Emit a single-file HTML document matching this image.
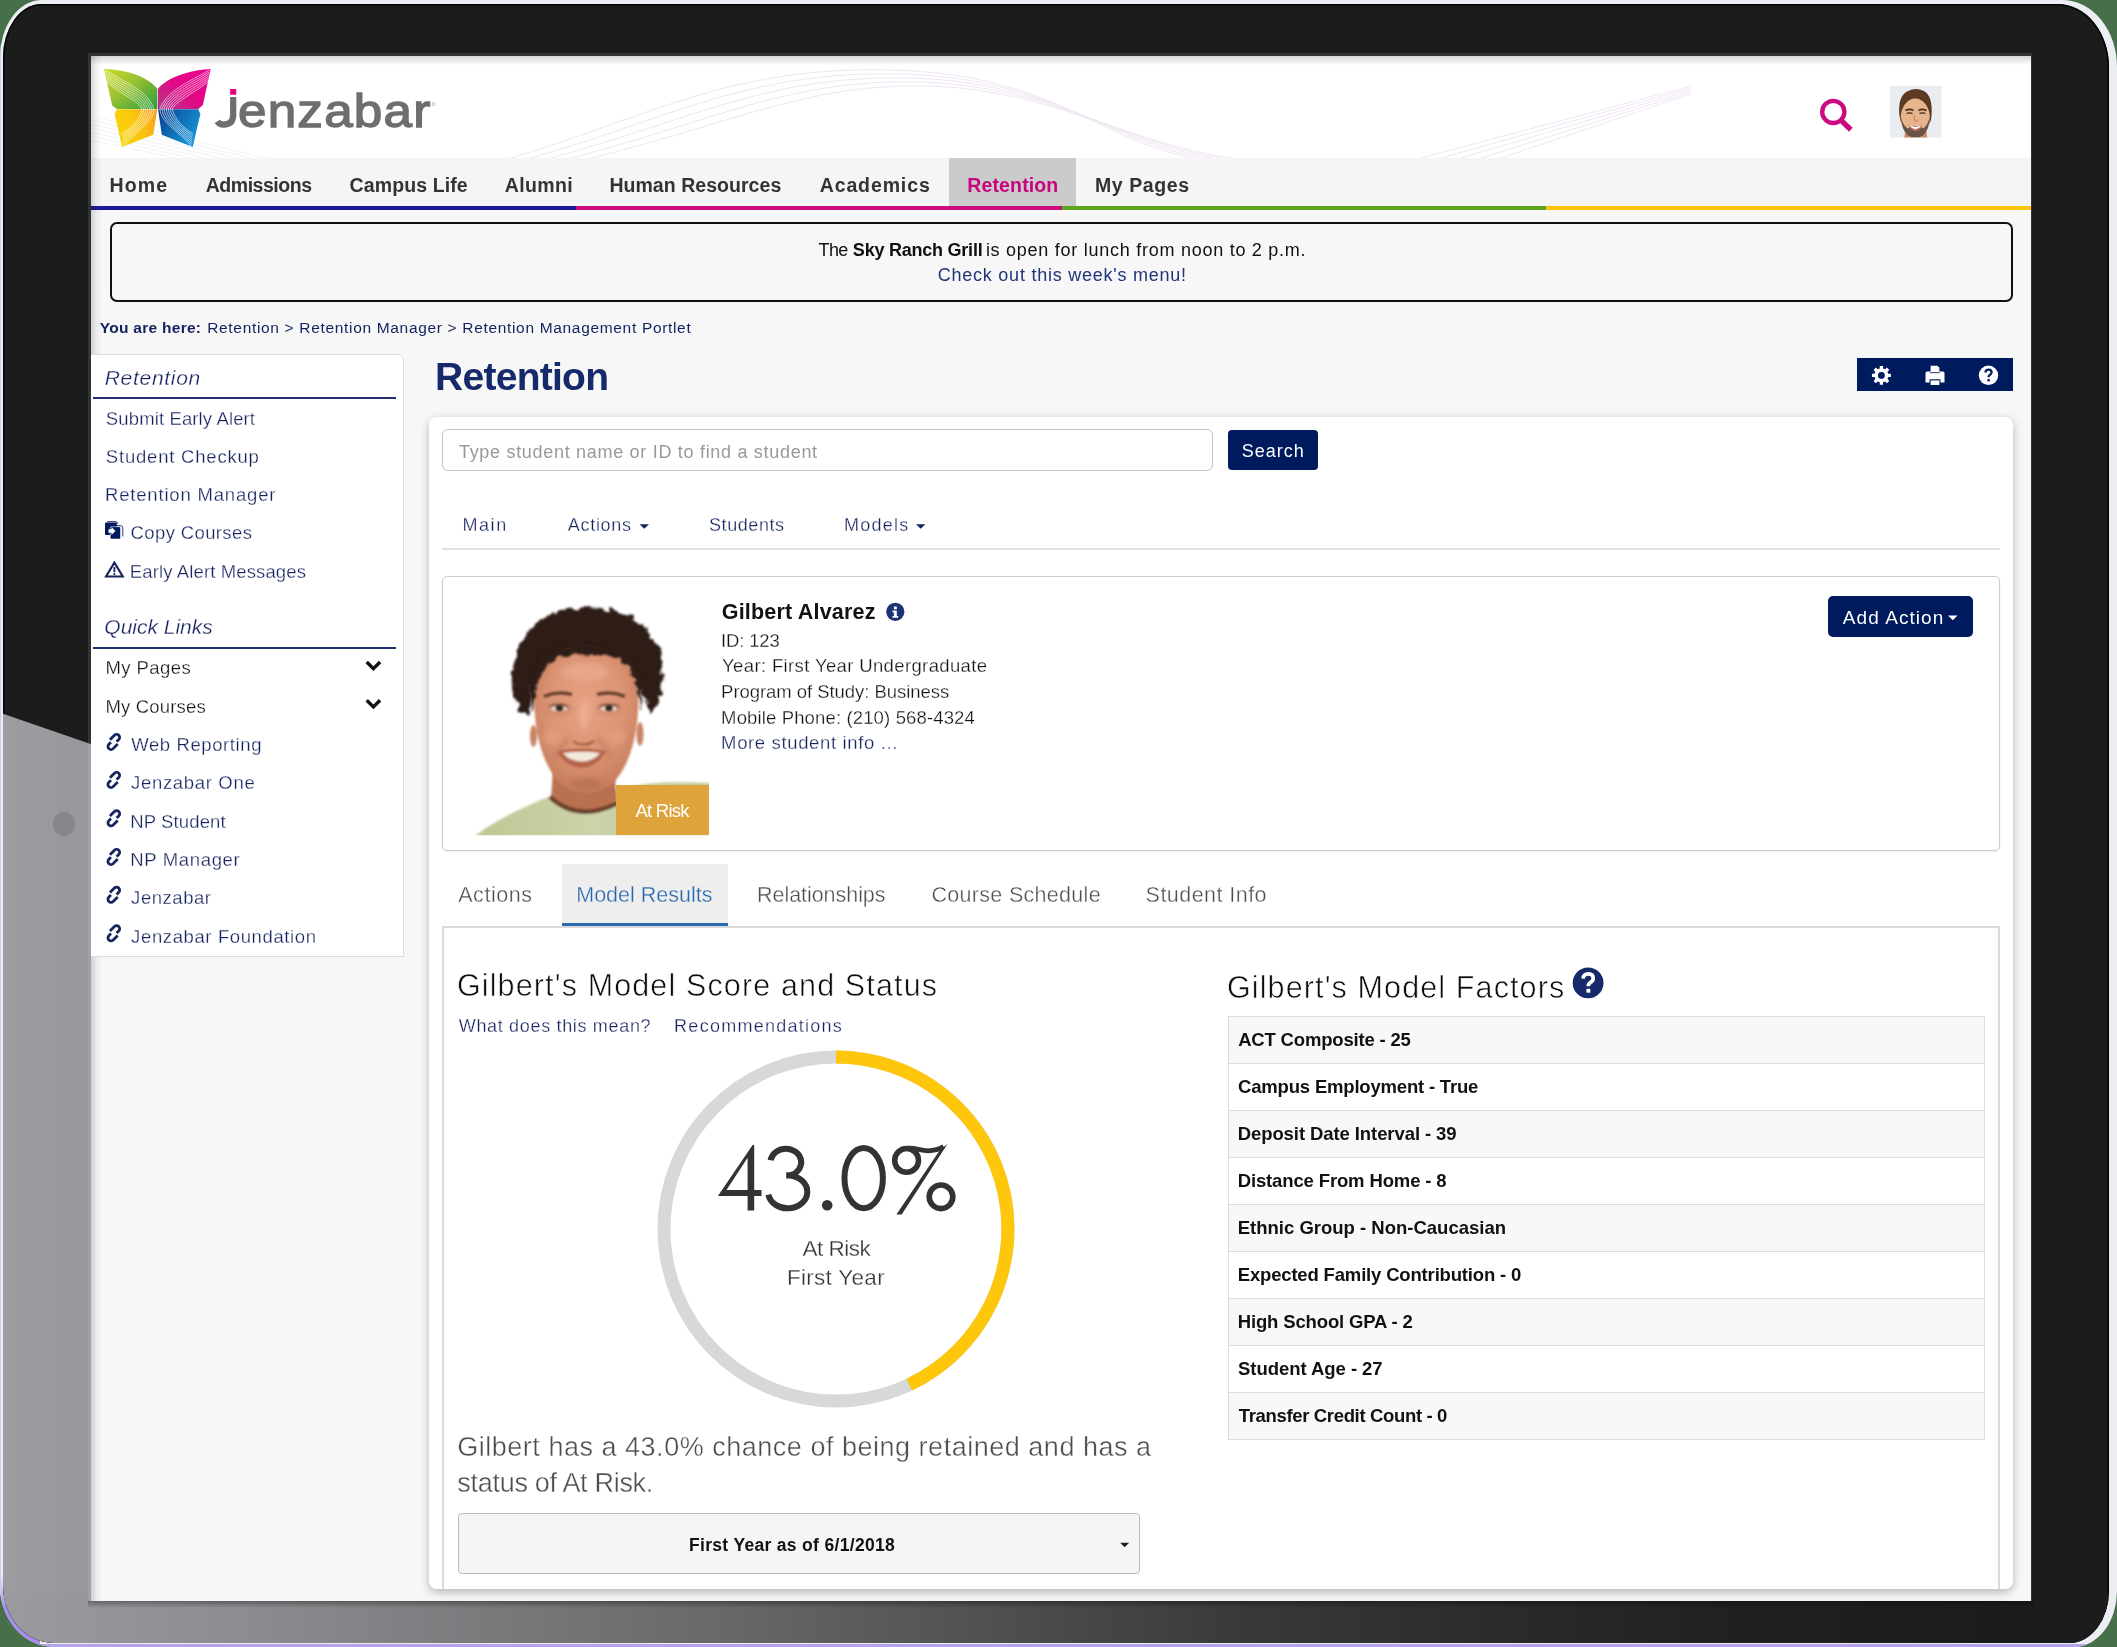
<!DOCTYPE html>
<html><head><meta charset="utf-8"><title>Retention</title>
<style>
html,body{margin:0;padding:0;}
body{width:2117px;height:1647px;overflow:hidden;background:#47704a;font-family:"Liberation Sans",sans-serif;position:relative;}
.a{position:absolute;}
.t{position:absolute;white-space:nowrap;}
svg{position:absolute;overflow:visible;}
</style></head><body>

<!-- tablet frame -->
<div class="a" style="left:0;top:0;width:2117px;height:1647px;border-radius:42px 55px 43px 54px / 57px 67px 56px 61px;background:#eceef4;overflow:hidden;"><div class="a" style="left:0;top:1644.4px;width:2085px;height:3px;background:#b5a3ea;"></div><div class="a" style="left:0;top:1575px;width:40px;height:72px;background:linear-gradient(to bottom,#eceef4,#a88df0 45%);"></div><div class="a" style="left:0;top:0;width:1.2px;height:1600px;background:#cbcbea;"></div></div>
<div class="a" id="bezel" style="left:3.4px;top:3.9px;width:2105.3px;height:1639px;border-radius:38.5px 51.5px 39.500px 50.500px / 53.500px 63px 52.500px 57.500px;background:#1b1d1c;overflow:hidden;box-shadow:inset 0 0 0 1.600px #050505;">
  <!-- glare -->
  <svg width="2105" height="1639" style="left:0;top:0"><defs>
    <linearGradient id="gb" x1="0" x2="1" y1="0" y2="0">
      <stop offset="0" stop-color="#9b9a9f"/><stop offset="0.118" stop-color="#8c8c90"/><stop offset="0.236" stop-color="#79797c"/>
      <stop offset="0.354" stop-color="#666668"/><stop offset="0.472" stop-color="#4e4f4f"/><stop offset="0.59" stop-color="#383a39"/>
      <stop offset="0.708" stop-color="#2a2b2a"/><stop offset="0.826" stop-color="#1f201f"/><stop offset="0.94" stop-color="#1b1d1c"/>
    </linearGradient>
    <linearGradient id="gl" x1="0" x2="1" y1="0" y2="0">
      <stop offset="0" stop-color="#9d9ca1"/><stop offset="1" stop-color="#97969b"/>
    </linearGradient></defs>
    <polygon points="0,709.800 87.600,740 95,740 95,1600 0,1600" fill="url(#gl)"/>
    <rect x="0" y="1590" width="2105" height="49" fill="url(#gb)"/>
  </svg>
  <div class="a" style="left:49.8px;top:808.3px;width:22px;height:23.7px;border-radius:50%;background:#868688;"></div>
</div>
<!-- screen -->
<div class="a" style="left:88px;top:1601px;width:1946px;height:7px;background:linear-gradient(to bottom,rgba(0,0,0,.32),rgba(0,0,0,0));"></div>
<div class="a" style="left:88px;top:53px;width:1943.5px;height:1548px;background:rgba(255,255,255,0.1);"></div>
<div class="a" id="screen" style="left:91px;top:56px;width:1940px;height:1545px;background:#f7f7f7;overflow:hidden;">
<div class="a" id="o" style="left:-91px;top:-56px;width:2117px;height:1647px;transform:translateZ(0);">

<!-- header -->
<div class="a" style="left:91px;top:56px;width:1940px;height:102px;background:#fff;"></div>
<svg width="1940" height="102" style="left:91px;top:56px" fill="none" stroke-width="1">
  <g stroke="#f0e6f3">
    <path d="M420 102 C560 60 640 10 800 14 S1000 80 1100 102"/>
    <path d="M440 102 C580 62 660 14 810 18 S1010 82 1110 102"/>
    <path d="M460 102 C600 64 680 18 820 22 S1020 84 1120 102"/>
    <path d="M480 102 C620 66 700 22 830 26 S1030 86 1130 102"/>
    <path d="M500 102 C640 68 720 26 840 30 S1040 88 1140 102"/>
    <path d="M1330 102 L1600 30 M1350 102 L1600 32 M1370 102 L1600 34 M1390 102 L1600 36 M1410 102 L1600 38"/>
  </g>
  <g stroke="#f0f3f8">
    <path d="M0 60 L175 102 M0 64 L160 102 M0 68 L145 102 M0 72 L130 102 M0 76 L115 102 M0 80 L100 102 M0 84 L85 102"/>
  </g>
</svg>
<!-- nav -->
<div class="a" style="left:91px;top:158px;width:1940px;height:48px;background:#f5f5f5;"></div>
<div class="a" style="left:949px;top:158px;width:127px;height:48px;background:#cbcbcb;"></div>
<div class="a" style="left:91px;top:206px;width:485px;height:4px;background:#1b1a9a;"></div>
<div class="a" style="left:576px;top:206px;width:486px;height:4px;background:#cc0a80;"></div>
<div class="a" style="left:1062px;top:206px;width:484px;height:4px;background:#5aa61f;"></div>
<div class="a" style="left:1546px;top:206px;width:485px;height:4px;background:#fcc40c;"></div>
<!-- announcement -->
<div class="a" style="left:110px;top:222px;width:1899px;height:76px;border:2px solid #111;border-radius:7px;background:#f7f7f7;"></div>
<!-- inner screen shadow (top/left) -->
<div class="a" style="left:91px;top:56px;width:1940px;height:9px;background:linear-gradient(to bottom,rgba(0,0,0,.16),rgba(0,0,0,0));"></div>
<div class="a" style="left:91px;top:56px;width:11px;height:1545px;background:linear-gradient(to right,rgba(0,0,0,.15),rgba(0,0,0,.05) 50%,rgba(0,0,0,0));"></div>

<!-- sidebar -->
<div class="a" style="left:85px;top:354px;width:317px;height:601px;background:#fff;border:1px solid #dcdcdc;border-radius:0 6px 0 0;"></div>
<div class="a" style="left:93px;top:397px;width:303px;height:2px;background:#1f2f70;"></div>
<div class="a" style="left:93px;top:647px;width:303px;height:2px;background:#1f2f70;"></div>

<div class="a" style="left:1857px;top:358px;width:156px;height:33px;background:#001a5e;"></div>
<div class="a" style="left:429px;top:417px;width:1584px;height:1171.5px;background:#fff;border-radius:8px;box-shadow:0 3px 10px rgba(0,0,0,.27);"></div>
<!-- search -->
<div class="a" style="left:442.3px;top:429.3px;width:769px;height:40px;border:1.7px solid #c4c4c4;border-radius:6px;background:#fff;"></div>
<div class="a" style="left:1228px;top:430px;width:90px;height:40px;border-radius:4px;background:#001a5e;"></div>
<div class="a" style="left:442px;top:548px;width:1558px;height:2px;background:#e2e2e2;"></div>
<!-- student card -->
<div class="a" style="left:442px;top:576px;width:1556px;height:273px;border:1px solid #ccc;border-radius:5px;background:#fff;box-shadow:0 1px 2px rgba(0,0,0,.08);"></div>
<div class="a" style="left:1828px;top:596px;width:145px;height:41px;border-radius:5px;background:#001a5e;"></div>
<!-- subtabs -->
<div class="a" style="left:562px;top:864px;width:166px;height:60px;background:#eee;"></div>
<div class="a" style="left:562px;top:923px;width:166px;height:3px;background:#2a6ab0;"></div>
<div class="a" style="left:442px;top:926px;width:1554px;height:661px;border:2px solid #dadada;border-bottom:none;"></div>

<svg width="380" height="380" style="left:646px;top:1039px">
  <circle cx="190" cy="190" r="172" fill="none" stroke="#d8d8d8" stroke-width="13"/>
  <path d="M190 18 A172 172 0 0 1 263.2 345.6" fill="none" stroke="#ffc70c" stroke-width="13"/>
</svg>
<div class="a" style="left:458px;top:1513px;width:680px;height:59px;border:1px solid #bbb;border-radius:4px;background:#f5f5f5;"></div>
<!-- factor table -->
<div class="a" style="left:1228px;top:1016px;width:755px;height:422px;border:1px solid #ddd;background:#fff;"></div>
<div class="a" style="left:1229px;top:1017.0px;width:755px;height:46px;background:#f8f8f8;border-bottom:1px solid #ddd;"></div>
<div class="a" style="left:1229px;top:1064.0px;width:755px;height:46px;background:#fff;border-bottom:1px solid #ddd;"></div>
<div class="a" style="left:1229px;top:1111.0px;width:755px;height:46px;background:#f8f8f8;border-bottom:1px solid #ddd;"></div>
<div class="a" style="left:1229px;top:1158.0px;width:755px;height:46px;background:#fff;border-bottom:1px solid #ddd;"></div>
<div class="a" style="left:1229px;top:1205.0px;width:755px;height:46px;background:#f8f8f8;border-bottom:1px solid #ddd;"></div>
<div class="a" style="left:1229px;top:1252.0px;width:755px;height:46px;background:#fff;border-bottom:1px solid #ddd;"></div>
<div class="a" style="left:1229px;top:1299.0px;width:755px;height:46px;background:#f8f8f8;border-bottom:1px solid #ddd;"></div>
<div class="a" style="left:1229px;top:1346.0px;width:755px;height:46px;background:#fff;border-bottom:1px solid #ddd;"></div>
<div class="a" style="left:1229px;top:1393.0px;width:755px;height:46px;background:#f8f8f8;border-bottom:1px solid #ddd;"></div>

<svg width="120" height="90" style="left:98px;top:62px" viewBox="98 62 120 90">
  <defs>
    <linearGradient id="lg1" x1="0" y1="0" x2="1" y2="0.9"><stop offset="0" stop-color="#ccdc2a"/><stop offset="0.45" stop-color="#9cc230"/><stop offset="1" stop-color="#35a03c"/></linearGradient>
    <linearGradient id="lg2" x1="1" y1="0" x2="0" y2="0.9"><stop offset="0" stop-color="#ec008c"/><stop offset="0.55" stop-color="#e10886"/><stop offset="1" stop-color="#b8358a"/></linearGradient>
    <linearGradient id="lg3" x1="0" y1="0.6" x2="1" y2="0.2"><stop offset="0" stop-color="#f5d60a"/><stop offset="0.5" stop-color="#fbc60c"/><stop offset="1" stop-color="#f5a31b"/></linearGradient>
    <linearGradient id="lg4" x1="0" y1="0.1" x2="1" y2="0.7"><stop offset="0" stop-color="#0a3c8c"/><stop offset="0.45" stop-color="#0f6cb5"/><stop offset="1" stop-color="#159ad8"/></linearGradient>
  </defs>
  <path d="M104 69.1 C120 69.3 138 73.5 149 81.3 C153 84 155.5 86.5 157.3 88.8 L157.3 108.9 L116.7 108.9 L112.2 105.6 Z" fill="url(#lg1)"/>
  <path d="M210.6 69.1 C194 69.8 177 74.5 166 81.8 C162 84.5 159.5 86.7 157.9 88.8 L157.9 108.9 L198.3 108.9 L202.9 105.1 Z" fill="url(#lg2)"/>
  <path d="M116.7 109.2 L157.2 109.2 L153.3 134.8 L122.1 147 L114.7 114.2 Z" fill="url(#lg3)"/>
  <path d="M158 109.2 L198.3 109.2 L200.3 114.2 L192.7 147 L161.8 134.8 Z" fill="url(#lg4)"/>
  <g fill="none" stroke="#fff" stroke-width="0.75" opacity="0.8">
    <path d="M105.0 70.0 C124.0 82.0 148.0 90.0 154.0 109 C155.0 121.0 139.0 128.0 123.5 146.0"/>
    <path d="M105.3 72.1 C123.8 84.3 146.4 91.7 151.9 109 C152.7 120.5 137.8 127.8 123.3 143.9"/>
    <path d="M105.7 74.1 C123.5 86.6 144.8 93.5 149.9 109 C150.4 120.1 136.7 127.5 123.0 141.9"/>
    <path d="M106.0 76.2 C123.3 88.9 143.2 95.2 147.8 109 C148.1 119.6 135.6 127.3 122.8 139.8"/>
    <path d="M106.4 78.3 C123.1 91.2 141.6 96.9 145.7 109 C145.8 119.2 134.4 127.1 122.6 137.7"/>
    <path d="M106.7 80.3 C122.8 93.5 139.9 98.6 143.7 109 C143.5 118.7 133.2 126.8 122.3 135.7"/>
    <path d="M107.1 82.4 C122.6 95.8 138.3 100.3 141.6 109 C141.2 118.2 132.1 126.6 122.1 133.6"/>
    <path d="M209.6 70.0 C190.0 81.0 166.0 91.0 160.0 109 C160.5 122.0 177.0 130.0 191.5 146.0"/>
    <path d="M209.3 72.1 C190.2 83.3 167.6 92.7 162.1 109 C162.8 121.5 178.2 129.8 191.7 143.9"/>
    <path d="M208.9 74.1 C190.5 85.6 169.2 94.5 164.1 109 C165.1 121.1 179.3 129.5 192.0 141.9"/>
    <path d="M208.6 76.2 C190.7 87.9 170.8 96.2 166.2 109 C167.4 120.6 180.4 129.3 192.2 139.8"/>
    <path d="M208.2 78.3 C190.9 90.2 172.4 97.9 168.3 109 C169.7 120.2 181.6 129.1 192.4 137.7"/>
    <path d="M207.9 80.3 C191.2 92.5 174.1 99.6 170.3 109 C172.0 119.7 182.8 128.8 192.7 135.7"/>
    <path d="M207.5 82.4 C191.4 94.8 175.7 101.3 172.4 109 C174.3 119.2 183.9 128.6 192.9 133.6"/>
  </g>
</svg>
<svg width="240" height="64" style="left:208px;top:76px" viewBox="208 76 240 64">
  <path d="M233.2 97 L233.2 114.5 Q233.2 124.6 223.6 124.6 Q219.3 124.6 217.3 121.3" fill="none" stroke="#6d6e70" stroke-width="6.2"/>
  <rect x="230.1" y="89" width="6.2" height="5.7" fill="#e6007e"/>
  <circle cx="433.6" cy="104.2" r="1.5" fill="none" stroke="#8a8b8d" stroke-width="0.6"/>
</svg>
<!-- search icon -->
<svg width="40" height="40" style="left:1816px;top:94px" viewBox="1816 94 40 40">
  <circle cx="1833.3" cy="111.9" r="11.1" fill="none" stroke="#cb0a80" stroke-width="4.3"/>
  <path d="M1841.4 120.6 L1850.8 129.8" stroke="#cb0a80" stroke-width="5.4" fill="none"/>
</svg>
<!-- avatar -->
<svg width="52" height="52" style="left:1890px;top:85.5px" viewBox="0 0 52 52">
  <defs><clipPath id="avc"><rect width="51.5" height="51.5"/></clipPath>
  <filter id="avb" x="-20%" y="-20%" width="140%" height="140%"><feGaussianBlur stdDeviation="0.75"/></filter></defs>
  <g clip-path="url(#avc)">
  <rect width="52" height="52" fill="#e9edf1"/>
  <g filter="url(#avb)">
  <path d="M14 53 L15.500 44 L36 44 L37.500 53 Z" fill="#c98a63"/>
  <path d="M9.500 30 Q7.500 12 16 6 Q25 0.500 34 5 Q43 10 41.500 30 Q41 36 39 38 L12 38 Q10 35 9.500 30Z" fill="#5b3a24"/>
  <ellipse cx="25.3" cy="32" rx="14.6" ry="19.5" fill="#e8b48c"/>
  <path d="M10.800 30 Q11.500 44 18 49.500 Q25.500 54 33 49.500 Q39.500 44 39.800 30 Q38 39 33.500 42.500 Q25.500 37.500 17.500 42.500 Q12.500 39 10.800 30Z" fill="#5e4a40" opacity="0.92"/>
  <path d="M18.600 39.200 Q25.500 42.500 32.600 39 Q30 45 25.500 45.200 Q21 45 18.600 39.200Z" fill="#b86a55"/>
  <path d="M19.600 39.600 Q25.500 42 31.600 39.500 Q29 43 25.500 43.200 Q22 43 19.600 39.600Z" fill="#fff"/>
  <path d="M15.500 24.500 Q19.500 22.300 23.500 24.500 M28.500 24.500 Q32.500 22.300 36.500 24.500" stroke="#4a2f1e" stroke-width="1.700" fill="none"/>
  <path d="M16.500 27.500 Q19.500 26.200 22.500 27.500 M29.500 27.500 Q32.500 26.200 35.500 27.500" stroke="#3a2a22" stroke-width="1.300" fill="none"/>
  <path d="M24.500 28.500 Q23.500 34 25.500 35.500 Q27.500 35.500 27.500 33.500" stroke="#c98a63" stroke-width="1.100" fill="none"/>
  </g></g>
</svg>
<svg width="2117" height="1647" style="left:0;top:0;pointer-events:none">
<g>
  <path d="M107.2 521.6 L115.6 521.6 Q117.8 521.6 117.8 523.8" fill="none" stroke="#17245f" stroke-width="0.9"/>
  <path d="M112.500 525.6 L120.6 525.6 Q122.8 525.6 122.8 527.8 L122.8 536.5" fill="none" stroke="#17245f" stroke-width="0.9"/>
  <rect x="105" y="522.6" width="11.8" height="12.4" rx="1" fill="#001a5e"/>
  <rect x="110.3" y="526.7" width="10.2" height="12.3" rx="1" fill="#001a5e" stroke="#fff" stroke-width="0.5"/>
  <path d="M108.5 529.3 L111.5 529.3 L111.5 527 L115.5 531 L111.5 535 L111.5 532.7 L108.5 532.7 Z" fill="#fff"/>
</g>
<g fill="none" stroke="#17245f" stroke-width="2.1" stroke-linejoin="miter">
  <path d="M114.4 562.6 L122.8 576.5 L106 576.5 Z"/>
  <path d="M114.4 567 L114.4 572.2" stroke-width="1.8"/>
  <circle cx="114.4" cy="574" r="0.5" stroke-width="1.2"/>
</g>
<g transform="translate(113.8 741.9) rotate(-45)" fill="none" stroke="#17245f" stroke-width="2.8" stroke-linecap="butt">
  <path d="M-1.2 -4.3 L5.2 -4.3 A3.05 3.05 0 0 1 5.2 1.8 L2.2 1.8"/>
  <path d="M1.2 4.3 L-5.2 4.3 A3.05 3.05 0 0 1 -5.2 -1.8 L-2.2 -1.8"/>
</g>
<g transform="translate(113.8 779.9) rotate(-45)" fill="none" stroke="#17245f" stroke-width="2.8" stroke-linecap="butt">
  <path d="M-1.2 -4.3 L5.2 -4.3 A3.05 3.05 0 0 1 5.2 1.8 L2.2 1.8"/>
  <path d="M1.2 4.3 L-5.2 4.3 A3.05 3.05 0 0 1 -5.2 -1.8 L-2.2 -1.8"/>
</g>
<g transform="translate(113.8 818.3) rotate(-45)" fill="none" stroke="#17245f" stroke-width="2.8" stroke-linecap="butt">
  <path d="M-1.2 -4.3 L5.2 -4.3 A3.05 3.05 0 0 1 5.2 1.8 L2.2 1.8"/>
  <path d="M1.2 4.3 L-5.2 4.3 A3.05 3.05 0 0 1 -5.2 -1.8 L-2.2 -1.8"/>
</g>
<g transform="translate(113.8 856.9) rotate(-45)" fill="none" stroke="#17245f" stroke-width="2.8" stroke-linecap="butt">
  <path d="M-1.2 -4.3 L5.2 -4.3 A3.05 3.05 0 0 1 5.2 1.8 L2.2 1.8"/>
  <path d="M1.2 4.3 L-5.2 4.3 A3.05 3.05 0 0 1 -5.2 -1.8 L-2.2 -1.8"/>
</g>
<g transform="translate(113.8 894.6999999999999) rotate(-45)" fill="none" stroke="#17245f" stroke-width="2.8" stroke-linecap="butt">
  <path d="M-1.2 -4.3 L5.2 -4.3 A3.05 3.05 0 0 1 5.2 1.8 L2.2 1.8"/>
  <path d="M1.2 4.3 L-5.2 4.3 A3.05 3.05 0 0 1 -5.2 -1.8 L-2.2 -1.8"/>
</g>
<g transform="translate(113.8 933.3) rotate(-45)" fill="none" stroke="#17245f" stroke-width="2.8" stroke-linecap="butt">
  <path d="M-1.2 -4.3 L5.2 -4.3 A3.05 3.05 0 0 1 5.2 1.8 L2.2 1.8"/>
  <path d="M1.2 4.3 L-5.2 4.3 A3.05 3.05 0 0 1 -5.2 -1.8 L-2.2 -1.8"/>
</g>
<path d="M366.7 662.0 L373.4 668.7 L380.1 662.0" fill="none" stroke="#111" stroke-width="3.4" stroke-linejoin="miter"/>
<path d="M366.7 700.1999999999999 L373.4 706.9 L380.1 700.1999999999999" fill="none" stroke="#111" stroke-width="3.4" stroke-linejoin="miter"/>
<path d="M639.6 524.15 L649 524.15 L644.3 528.85 Z" fill="#17245f"/>
<path d="M916 524.15 L925.4 524.15 L920.7 528.85 Z" fill="#17245f"/>
<path d="M1948.1 615.4499999999999 L1957.5 615.4499999999999 L1952.8 620.15 Z" fill="#fff"/>
<path d="M1120.1 1542.625 L1129.2 1542.625 L1124.65 1547.1750000000002 Z" fill="#222"/>
<circle cx="895.3" cy="611.8" r="9.1" fill="#1a3372"/>
<path d="M893.9 606.6 h2.9 v2.7 h-2.9 z M893.3 610.600 h3.5 v5.3 h1.400 v1.900 h-5.700 v-1.900 h1.400 v-3.400 h-1.400 v-1.900 z" fill="#fff"/>
<path d="M1879.75 365.94 L1883.05 365.94 L1883.06 368.50 L1885.11 369.35 L1886.92 367.55 L1889.25 369.88 L1887.45 371.69 L1888.30 373.74 L1890.86 373.75 L1890.86 377.05 L1888.30 377.06 L1887.45 379.11 L1889.25 380.92 L1886.92 383.25 L1885.11 381.45 L1883.06 382.30 L1883.05 384.86 L1879.75 384.86 L1879.74 382.30 L1877.69 381.45 L1875.88 383.25 L1873.55 380.92 L1875.35 379.11 L1874.50 377.06 L1871.94 377.05 L1871.94 373.75 L1874.50 373.74 L1875.35 371.69 L1873.55 369.88 L1875.88 367.55 L1877.69 369.35 L1879.74 368.50Z M1884.8 375.4 a3.4 3.4 0 1 0 -6.800 0 a3.4 3.4 0 1 0 6.800 0Z" fill="#fff" fill-rule="evenodd"/>
<g fill="#fff">
  <path d="M1930.6 365.8 L1937.4 365.8 L1939.4 367.8 L1939.4 372.8 L1930.6 372.8 Z"/>
  <path d="M1927 371.6 L1943 371.6 Q1944.500 371.6 1944.500 373.1 L1944.500 382.600 L1940.400 382.600 L1940.400 379.200 L1929.600 379.200 L1929.600 382.600 L1925.500 382.600 L1925.500 373.100 Q1925.500 371.6 1927 371.6 Z"/>
  <path d="M1930.600 380.400 L1939.400 380.400 L1939.400 385 L1930.600 385 Z"/>
</g>
<path d="M1930.2 372.7 L1939.8 372.7" stroke="#001a5e" stroke-width="0.9"/>
<circle cx="1988.5" cy="375.3" r="9.7" fill="#fff"/>
<path d="M1985.400 372.500 Q1985.600 369.600 1988.600 369.600 Q1991.600 369.600 1991.600 372.300 Q1991.600 374 1989.800 375 Q1988.600 375.700 1988.600 377.300" fill="none" stroke="#001a5e" stroke-width="2.3"/>
<rect x="1987.400" y="379" width="2.400" height="2.400" fill="#001a5e"/>
<circle cx="1588.1" cy="982.9" r="15.4" fill="#17296b"/>
<path d="M1583.100 978.600 Q1583.400 973.800 1588.300 973.800 Q1593.200 973.800 1593.200 978.200 Q1593.200 981 1590.300 982.600 Q1588.300 983.800 1588.300 986.300" fill="none" stroke="#fff" stroke-width="3.700"/>
<rect x="1586.400" y="988.800" width="3.900" height="3.900" fill="#fff"/>
</svg>

<svg width="260" height="90" style="left:710px;top:1135px" viewBox="710 1135 260 90" fill="none" stroke="#333" stroke-width="6">
  <path d="M717.9 1196 L752.6 1145.1 L754.2 1145.1 L754.2 1190.1 L761.5 1190.1 L761.5 1196 L754.2 1196 L754.2 1210.6 L747.6 1210.6 L747.6 1196 Z M747.6 1190.1 L747.6 1157.7 L726.5 1190.1 Z" fill="#333" stroke="none" fill-rule="evenodd"/>
  <path d="M770.6 1160.3 A15.4 13.6 0 1 1 790.6 1175.2 L786.2 1175.2 M786.2 1175.4 L789.5 1175.4 A19.6 16.5 0 1 1 768.4 1194.6"/>
  <circle cx="827.2" cy="1205.3" r="5.3" fill="#333" stroke="none"/>
  <ellipse cx="863.7" cy="1178.2" rx="19.2" ry="30.1"/>
  <circle cx="906.6" cy="1160.4" r="11.9" stroke-width="5.6"/>
  <circle cx="941" cy="1196.8" r="11.8" stroke-width="5.6"/>
  <path d="M906.6 1148.4 C914 1147 920 1150.8 928 1150.8 C934 1150.8 939.500 1149.200 943.500 1146.600" stroke-width="4.800"/>
  <path d="M947.6 1143.8 L901.7 1214.6 L896.4 1214.6 L939.800 1150.200 Z" fill="#333" stroke="none"/>
</svg>

<svg width="236" height="240" style="left:474px;top:596px" viewBox="474 596 236 240">
  <defs>
    <filter id="pb" x="-10%" y="-10%" width="120%" height="120%"><feGaussianBlur stdDeviation="1.2"/></filter>
    <filter id="pb2" x="-20%" y="-20%" width="140%" height="140%"><feGaussianBlur stdDeviation="2.6"/></filter>
    <filter id="hr" x="-15%" y="-15%" width="130%" height="130%">
      <feTurbulence type="fractalNoise" baseFrequency="0.11" numOctaves="2" seed="7" result="n"/>
      <feDisplacementMap in="SourceGraphic" in2="n" scale="10" xChannelSelector="R" yChannelSelector="G"/>
      <feGaussianBlur stdDeviation="0.9"/>
    </filter>
    <clipPath id="pc"><rect x="474" y="596" width="235" height="239.200"/></clipPath>
    <radialGradient id="skin" cx="0.5" cy="0.40" r="0.65"><stop offset="0" stop-color="#e7a384"/><stop offset="0.55" stop-color="#dc9474"/><stop offset="1" stop-color="#c27858"/></radialGradient>
    <linearGradient id="shirt" x1="0" y1="0" x2="1" y2="0"><stop offset="0" stop-color="#bfc795"/><stop offset="0.5" stop-color="#cdd2a8"/><stop offset="1" stop-color="#c3ca9b"/></linearGradient>
  </defs>
  <g clip-path="url(#pc)">
   <g filter="url(#pb)">
    <path d="M474 837 C492 822 525 806 553 795 L615 790 C640 783 662 781 712 783 L712 838 Z" fill="url(#shirt)"/>
    <path d="M553 770 L614 770 L617 800 Q586 826 551 799 Z" fill="#b9714f"/>
    <path d="M550 797 Q578 823 618 803" fill="none" stroke="#6b3f2a" stroke-width="4.500"/>
   </g>
   <g filter="url(#hr)">
    <path d="M516 704 C506 664 520 628 552 614 C580 603 615 606 636 620 C660 636 668 668 659 700 C657 706 654 709 650 711 L640 686 L532 686 L528 714 C522 712 518 710 516 704 Z" fill="#2f1b15"/>
   </g>
   <g filter="url(#pb)">
    <ellipse cx="533.500" cy="736" rx="3.500" ry="11" fill="#c98465"/>
    <ellipse cx="640" cy="734" rx="3.500" ry="12" fill="#c98465"/>
    <path d="M534 700 C532 668 548 648 586 647 C626 648 640 668 638.500 700 C638 740 628 768 612 784 C600 795 574 796 562 785 C546 770 535 742 534 700 Z" fill="url(#skin)"/>
   </g>
   <g filter="url(#hr)">
    <path d="M533 712 C526 690 530 664 544 653 C560 641 612 640 629 653 C643 664 646 690 640 712 C641 684 632 664 613 658 C596 653 572 653 558 658 C541 665 534 686 533 712Z" fill="#2f1b15"/>
   </g>
   <g filter="url(#pb2)" opacity="0.6">
    <ellipse cx="585" cy="672" rx="24" ry="9" fill="#eeb194"/>
    <ellipse cx="584" cy="716" rx="5" ry="14" fill="#f0b89c"/>
    <ellipse cx="559" cy="708" rx="13" ry="6" fill="#c27d5e"/>
    <ellipse cx="609" cy="708" rx="13" ry="6" fill="#c27d5e"/>
    <ellipse cx="552" cy="737" rx="9" ry="8" fill="#e7a283"/>
    <ellipse cx="617" cy="737" rx="9" ry="8" fill="#e7a283"/>
    <ellipse cx="586" cy="784" rx="16" ry="6" fill="#b06a4c"/>
    <path d="M568 738 Q560 748 556 758" stroke="#b3694d" stroke-width="3" fill="none"/>
    <path d="M598 738 Q606 748 609 758" stroke="#b3694d" stroke-width="3" fill="none"/>
   </g>
   <g filter="url(#pb)">
    <path d="M544 696.500 Q558 690.500 572 694.500" fill="none" stroke="#5f3b2a" stroke-width="3.200"/>
    <path d="M597 694.500 Q611 690.500 625 696.500" fill="none" stroke="#5f3b2a" stroke-width="3.200"/>
    <ellipse cx="559" cy="708.800" rx="8" ry="2.900" fill="#f1e2d6"/>
    <ellipse cx="608.800" cy="708.800" rx="8" ry="2.900" fill="#f1e2d6"/>
    <ellipse cx="559.500" cy="708.600" rx="4.200" ry="3" fill="#3a2219"/>
    <ellipse cx="609" cy="708.600" rx="4.200" ry="3" fill="#3a2219"/>
    <path d="M550 706.500 Q559 703 568 706.800 M599.500 706.800 Q609 703 618 706.500" fill="none" stroke="#5a382a" stroke-width="1.600"/>
    <path d="M573 741 Q578 745.500 583 744 Q588 745.500 594 741" fill="none" stroke="#a95f45" stroke-width="2.300"/>
    <path d="M557 751 Q582 746 606 751 Q598 767 582 768 Q565 767 557 751Z" fill="#b5654c"/>
    <path d="M563 753 Q582 750.500 600 753 Q594 761 582 761.500 Q569 761 563 753Z" fill="#f3e9dd"/>
   </g>
  </g>
</svg>
<div class="a" style="left:616px;top:785px;width:93px;height:50.2px;background:#dfa33c;"></div>
<span class="t" style="left:109.40px;top:174.3px;font-size:19.5px;line-height:23.40px;color:#333;font-weight:700;letter-spacing:1.184px;">Home</span>
<span class="t" style="left:205.69px;top:174.3px;font-size:19.5px;line-height:23.40px;color:#333;font-weight:700;letter-spacing:-0.463px;">Admissions</span>
<span class="t" style="left:349.60px;top:174.3px;font-size:19.5px;line-height:23.40px;color:#333;font-weight:700;letter-spacing:0.101px;">Campus Life</span>
<span class="t" style="left:504.84px;top:174.3px;font-size:19.5px;line-height:23.40px;color:#333;font-weight:700;letter-spacing:0.338px;">Alumni</span>
<span class="t" style="left:609.40px;top:174.3px;font-size:19.5px;line-height:23.40px;color:#333;font-weight:700;letter-spacing:0.044px;">Human Resources</span>
<span class="t" style="left:819.69px;top:174.3px;font-size:19.5px;line-height:23.40px;color:#333;font-weight:700;letter-spacing:0.885px;">Academics</span>
<span class="t" style="left:1095.05px;top:174.3px;font-size:19.5px;line-height:23.40px;color:#333;font-weight:700;letter-spacing:0.577px;">My Pages</span>
<span class="t" style="left:967.30px;top:174.3px;font-size:19.5px;line-height:23.40px;color:#c7057f;font-weight:700;letter-spacing:0.134px;">Retention</span>
<span class="t" style="left:818.59px;top:240.0px;font-size:18px;line-height:21.60px;color:#111;letter-spacing:-0.613px;">The</span>
<span class="t" style="left:852.87px;top:240.0px;font-size:18px;line-height:21.60px;color:#111;font-weight:700;letter-spacing:-0.233px;">Sky Ranch Grill</span>
<span class="t" style="left:985.89px;top:240.0px;font-size:18px;line-height:21.60px;color:#111;letter-spacing:0.737px;">is open for lunch from noon to 2 p.m.</span>
<span class="t" style="left:937.80px;top:265.2px;font-size:18px;line-height:21.60px;color:#203479;letter-spacing:0.756px;">Check out this week's menu!</span>
<span class="t" style="left:99.80px;top:318.8px;font-size:15.5px;line-height:18.60px;color:#13215f;font-weight:700;letter-spacing:0.275px;">You are here:</span>
<span class="t" style="left:207.21px;top:318.8px;font-size:15.5px;line-height:18.60px;color:#13215f;letter-spacing:0.674px;">Retention > Retention Manager > Retention Management Portlet</span>
<span class="t" style="left:104.76px;top:364.7px;font-size:21px;line-height:25.20px;color:#13215f;font-style:italic;letter-spacing:0.704px;-webkit-text-stroke:0.28px #fff;">Retention</span>
<span class="t" style="left:104.36px;top:614.2px;font-size:21px;line-height:25.20px;color:#13215f;font-style:italic;letter-spacing:-0.025px;-webkit-text-stroke:0.28px #fff;">Quick Links</span>
<span class="t" style="left:105.85px;top:407.6px;font-size:18.5px;line-height:22.20px;color:#13215f;letter-spacing:0.125px;-webkit-text-stroke:0.28px #fff;">Submit Early Alert</span>
<span class="t" style="left:105.85px;top:445.9px;font-size:18.5px;line-height:22.20px;color:#13215f;letter-spacing:0.792px;-webkit-text-stroke:0.28px #fff;">Student Checkup</span>
<span class="t" style="left:104.97px;top:484.0px;font-size:18.5px;line-height:22.20px;color:#13215f;letter-spacing:0.819px;-webkit-text-stroke:0.28px #fff;">Retention Manager</span>
<span class="t" style="left:130.60px;top:522.3px;font-size:18.5px;line-height:22.20px;color:#13215f;letter-spacing:0.371px;-webkit-text-stroke:0.28px #fff;">Copy Courses</span>
<span class="t" style="left:129.84px;top:560.6px;font-size:18.5px;line-height:22.20px;color:#13215f;letter-spacing:0.121px;-webkit-text-stroke:0.28px #fff;">Early Alert Messages</span>
<span class="t" style="left:105.41px;top:657.2px;font-size:18.5px;line-height:22.20px;color:#111;letter-spacing:0.444px;-webkit-text-stroke:0.28px #fff;">My Pages</span>
<span class="t" style="left:105.41px;top:695.8px;font-size:18.5px;line-height:22.20px;color:#111;letter-spacing:0.178px;-webkit-text-stroke:0.28px #fff;">My Courses</span>
<span class="t" style="left:131.17px;top:734.2px;font-size:18.5px;line-height:22.20px;color:#13215f;letter-spacing:0.608px;-webkit-text-stroke:0.28px #fff;">Web Reporting</span>
<span class="t" style="left:131.12px;top:772.2px;font-size:18.5px;line-height:22.20px;color:#13215f;letter-spacing:0.669px;-webkit-text-stroke:0.28px #fff;">Jenzabar One</span>
<span class="t" style="left:130.14px;top:810.6px;font-size:18.5px;line-height:22.20px;color:#13215f;letter-spacing:0.142px;-webkit-text-stroke:0.28px #fff;">NP Student</span>
<span class="t" style="left:130.14px;top:849.2px;font-size:18.5px;line-height:22.20px;color:#13215f;letter-spacing:0.675px;-webkit-text-stroke:0.28px #fff;">NP Manager</span>
<span class="t" style="left:131.12px;top:887.0px;font-size:18.5px;line-height:22.20px;color:#13215f;letter-spacing:0.544px;-webkit-text-stroke:0.28px #fff;">Jenzabar</span>
<span class="t" style="left:131.12px;top:925.6px;font-size:18.5px;line-height:22.20px;color:#13215f;letter-spacing:0.614px;-webkit-text-stroke:0.28px #fff;">Jenzabar Foundation</span>
<span class="t" style="left:435.04px;top:353.9px;font-size:39px;line-height:46.80px;color:#16296b;font-weight:700;letter-spacing:-0.734px;">Retention</span>
<span class="t" style="left:458.94px;top:441.6px;font-size:18px;line-height:21.60px;color:#999;letter-spacing:0.699px;">Type student name or ID to find a student</span>
<span class="t" style="left:1241.87px;top:440.7px;font-size:18px;line-height:21.60px;color:#fff;letter-spacing:0.957px;">Search</span>
<span class="t" style="left:462.52px;top:514.9px;font-size:18px;line-height:21.60px;color:#13215f;letter-spacing:1.543px;-webkit-text-stroke:0.28px #fff;">Main</span>
<span class="t" style="left:567.76px;top:514.9px;font-size:18px;line-height:21.60px;color:#13215f;letter-spacing:0.712px;-webkit-text-stroke:0.28px #fff;">Actions</span>
<span class="t" style="left:709.06px;top:514.9px;font-size:18px;line-height:21.60px;color:#13215f;letter-spacing:0.563px;-webkit-text-stroke:0.28px #fff;">Students</span>
<span class="t" style="left:844.08px;top:514.9px;font-size:18px;line-height:21.60px;color:#13215f;letter-spacing:1.223px;-webkit-text-stroke:0.28px #fff;">Models</span>
<span class="t" style="left:721.77px;top:599.9px;font-size:21.5px;line-height:25.80px;color:#111;font-weight:700;letter-spacing:0.191px;">Gilbert Alvarez</span>
<span class="t" style="left:721.10px;top:629.8px;font-size:18.5px;line-height:22.20px;color:#111;letter-spacing:-0.176px;-webkit-text-stroke:0.28px #fff;">ID: 123</span>
<span class="t" style="left:722.10px;top:655.4px;font-size:18.5px;line-height:22.20px;color:#111;letter-spacing:0.365px;-webkit-text-stroke:0.28px #fff;">Year: First Year Undergraduate</span>
<span class="t" style="left:721.10px;top:681.0px;font-size:18.5px;line-height:22.20px;color:#111;letter-spacing:-0.047px;-webkit-text-stroke:0.28px #fff;">Program of Study: Business</span>
<span class="t" style="left:721.10px;top:706.6px;font-size:18.5px;line-height:22.20px;color:#111;letter-spacing:0.140px;-webkit-text-stroke:0.28px #fff;">Mobile Phone: (210) 568-4324</span>
<span class="t" style="left:721.10px;top:732.3px;font-size:18.5px;line-height:22.20px;color:#13215f;letter-spacing:0.637px;-webkit-text-stroke:0.28px #fff;">More student info ...</span>
<span class="t" style="left:635.41px;top:800.1px;font-size:18.5px;line-height:22.20px;color:#fff;letter-spacing:-0.729px;">At Risk</span>
<span class="t" style="left:1842.86px;top:606.8px;font-size:19px;line-height:22.80px;color:#fff;letter-spacing:1.066px;">Add Action</span>
<span class="t" style="left:458.24px;top:883.4px;font-size:21.5px;line-height:25.80px;color:#4d4d4d;letter-spacing:0.542px;-webkit-text-stroke:0.35px #fff;">Actions</span>
<span class="t" style="left:576.24px;top:883.4px;font-size:21.5px;line-height:25.80px;color:#2565ad;letter-spacing:0.005px;-webkit-text-stroke:0.35px #eee;">Model Results</span>
<span class="t" style="left:757.05px;top:883.4px;font-size:21.5px;line-height:25.80px;color:#4d4d4d;letter-spacing:-0.050px;-webkit-text-stroke:0.35px #fff;">Relationships</span>
<span class="t" style="left:931.54px;top:883.4px;font-size:21.5px;line-height:25.80px;color:#4d4d4d;letter-spacing:0.297px;-webkit-text-stroke:0.35px #fff;">Course Schedule</span>
<span class="t" style="left:1145.60px;top:883.4px;font-size:21.5px;line-height:25.80px;color:#4d4d4d;letter-spacing:0.454px;-webkit-text-stroke:0.35px #fff;">Student Info</span>
<span class="t" style="left:456.93px;top:967.1px;font-size:30.5px;line-height:36.60px;color:#0c0c0c;letter-spacing:1.134px;-webkit-text-stroke:0.6px #fff;">Gilbert's Model Score and Status</span>
<span class="t" style="left:1226.99px;top:969.2px;font-size:30.5px;line-height:36.60px;color:#0c0c0c;letter-spacing:1.119px;-webkit-text-stroke:0.6px #fff;">Gilbert's Model Factors</span>
<span class="t" style="left:458.78px;top:1015.6px;font-size:18px;line-height:21.60px;color:#13215f;letter-spacing:0.669px;-webkit-text-stroke:0.28px #fff;">What does this mean?</span>
<span class="t" style="left:674.12px;top:1015.6px;font-size:18px;line-height:21.60px;color:#13215f;letter-spacing:1.254px;-webkit-text-stroke:0.28px #fff;">Recommendations</span>
<span class="t" style="left:802.38px;top:1234.9px;font-size:22.5px;line-height:27.00px;color:#333;letter-spacing:-0.492px;-webkit-text-stroke:0.3px #fff;">At Risk</span>
<span class="t" style="left:786.90px;top:1264.4px;font-size:22.5px;line-height:27.00px;color:#333;letter-spacing:0.303px;-webkit-text-stroke:0.3px #fff;">First Year</span>
<span class="t" style="left:457.25px;top:1431.3px;font-size:27px;line-height:32.40px;color:#4c4c4c;letter-spacing:0.516px;-webkit-text-stroke:0.4px #fff;">Gilbert has a 43.0% chance of being retained and has a</span>
<span class="t" style="left:457.36px;top:1466.8px;font-size:27px;line-height:32.40px;color:#4c4c4c;letter-spacing:-0.302px;-webkit-text-stroke:0.4px #fff;">status of At Risk.</span>
<span class="t" style="left:689.00px;top:1534.8px;font-size:17.5px;line-height:21.00px;color:#111;font-weight:700;letter-spacing:0.319px;">First Year as of 6/1/2018</span>
<span class="t" style="left:1238.17px;top:1029.3px;font-size:18.5px;line-height:22.20px;color:#111;font-weight:700;letter-spacing:-0.180px;">ACT Composite - 25</span>
<span class="t" style="left:1238.10px;top:1076.3px;font-size:18.5px;line-height:22.20px;color:#111;font-weight:700;letter-spacing:-0.192px;">Campus Employment - True</span>
<span class="t" style="left:1237.72px;top:1123.3px;font-size:18.5px;line-height:22.20px;color:#111;font-weight:700;letter-spacing:-0.086px;">Deposit Date Interval - 39</span>
<span class="t" style="left:1237.72px;top:1170.3px;font-size:18.5px;line-height:22.20px;color:#111;font-weight:700;letter-spacing:-0.138px;">Distance From Home - 8</span>
<span class="t" style="left:1237.72px;top:1217.3px;font-size:18.5px;line-height:22.20px;color:#111;font-weight:700;letter-spacing:0.000px;">Ethnic Group - Non-Caucasian</span>
<span class="t" style="left:1237.72px;top:1264.3px;font-size:18.5px;line-height:22.20px;color:#111;font-weight:700;letter-spacing:-0.169px;">Expected Family Contribution - 0</span>
<span class="t" style="left:1237.72px;top:1311.3px;font-size:18.5px;line-height:22.20px;color:#111;font-weight:700;letter-spacing:-0.146px;">High School GPA - 2</span>
<span class="t" style="left:1238.09px;top:1358.3px;font-size:18.5px;line-height:22.20px;color:#111;font-weight:700;letter-spacing:-0.049px;">Student Age - 27</span>
<span class="t" style="left:1238.75px;top:1405.3px;font-size:18.5px;line-height:22.20px;color:#111;font-weight:700;letter-spacing:-0.343px;">Transfer Credit Count - 0</span>
<span class="t" style="left:238.37px;top:83.0px;font-size:47px;line-height:56.40px;color:#6d6e70;letter-spacing:1.096px;-webkit-text-stroke:1.4px #6d6e70;transform:scaleX(1.09);transform-origin:0 50%;">enzabar</span>

</div></div>
</body></html>
